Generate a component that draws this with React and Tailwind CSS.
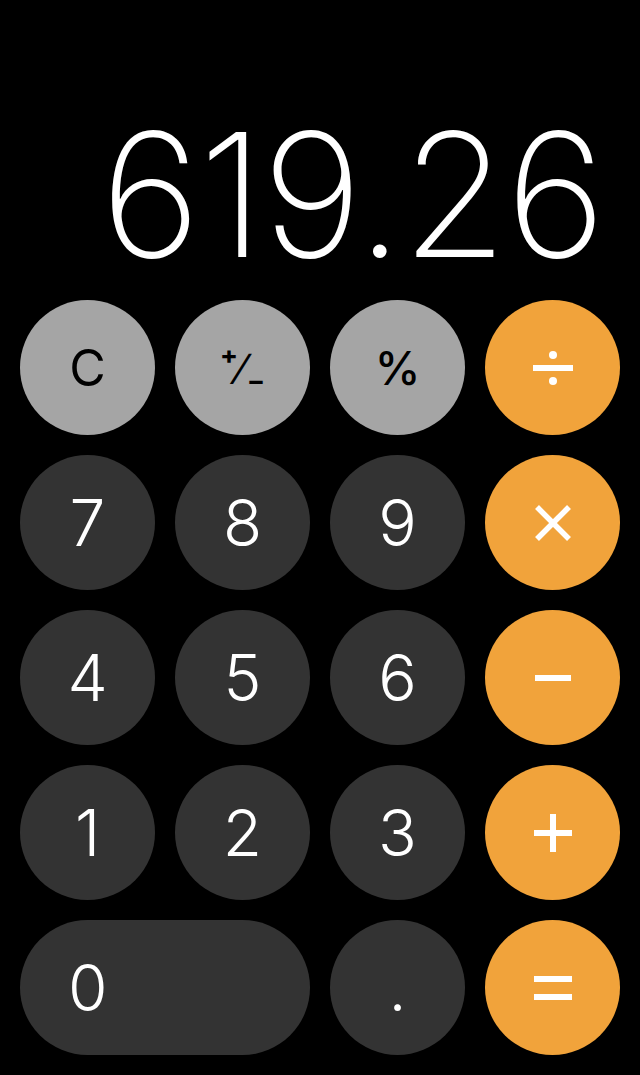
import React from "react";

const font = { fontFamily: "Inter, 'Noto Sans', sans-serif" };

function Key({ children, tone = "dark", wide = false }) {
  const tones = {
    light: "bg-[#a5a5a5] text-black",
    dark: "bg-[#333333] text-white",
    orange: "bg-[#f1a33b] text-white",
  };
  return (
    <button
      className={
        "h-[135px] rounded-full flex items-center " +
        tones[tone] +
        (wide ? " col-span-2 justify-start pl-[48px]" : " w-[135px] justify-center")
      }
    >
      {children}
    </button>
  );
}

const Digit = ({ children }) => (
  <span className="text-[64px] font-light leading-none">{children}</span>
);

const Fn = ({ children }) => (
  <span className="text-[50px] font-normal leading-none">{children}</span>
);

function Divide() {
  return (
    <svg width="40" height="34" viewBox="0 0 40 34" fill="white">
      <circle cx="20" cy="4" r="4" />
      <rect x="0" y="14" width="40" height="6" />
      <circle cx="20" cy="30" r="4" />
    </svg>
  );
}

function Times() {
  return (
    <svg width="36" height="36" viewBox="0 0 36 36" stroke="white" strokeWidth="5.5">
      <line x1="2" y1="2" x2="34" y2="34" />
      <line x1="34" y1="2" x2="2" y2="34" />
    </svg>
  );
}

function Minus() {
  return (
    <svg width="36" height="6" viewBox="0 0 36 6" fill="white">
      <rect x="0" y="0" width="36" height="6" />
    </svg>
  );
}

function Plus() {
  return (
    <svg width="38" height="38" viewBox="0 0 38 38" fill="white">
      <rect x="0" y="16" width="38" height="6" />
      <rect x="16" y="0" width="6" height="38" />
    </svg>
  );
}

function Equals() {
  return (
    <svg width="38" height="24" viewBox="0 0 38 24" fill="white">
      <rect x="0" y="0" width="38" height="6" />
      <rect x="0" y="18" width="38" height="6" />
    </svg>
  );
}

export default function App() {
  return (
    <div className="w-[640px] h-[1075px] bg-black flex flex-col justify-end px-[20px] pb-[20px]" style={font}>
      <div className="flex justify-end pr-[16px] pb-[20px]">
        <span className="text-white text-[172px] font-extralight leading-none tracking-[-2px]">
          619.26
        </span>
      </div>
      <div className="grid grid-cols-4 gap-[20px]">
        <Key tone="light"><Fn>C</Fn></Key>
        <Key tone="light">
          <span className="text-[44px] font-medium leading-none">⁺∕₋</span>
        </Key>
        <Key tone="light"><span className="text-[46px] font-medium leading-none">%</span></Key>
        <Key tone="orange"><Divide /></Key>

        <Key><Digit>7</Digit></Key>
        <Key><Digit>8</Digit></Key>
        <Key><Digit>9</Digit></Key>
        <Key tone="orange"><Times /></Key>

        <Key><Digit>4</Digit></Key>
        <Key><Digit>5</Digit></Key>
        <Key><Digit>6</Digit></Key>
        <Key tone="orange"><Minus /></Key>

        <Key><Digit>1</Digit></Key>
        <Key><Digit>2</Digit></Key>
        <Key><Digit>3</Digit></Key>
        <Key tone="orange"><Plus /></Key>

        <Key wide><Digit>0</Digit></Key>
        <Key><Digit>.</Digit></Key>
        <Key tone="orange"><Equals /></Key>
      </div>
    </div>
  );
}
